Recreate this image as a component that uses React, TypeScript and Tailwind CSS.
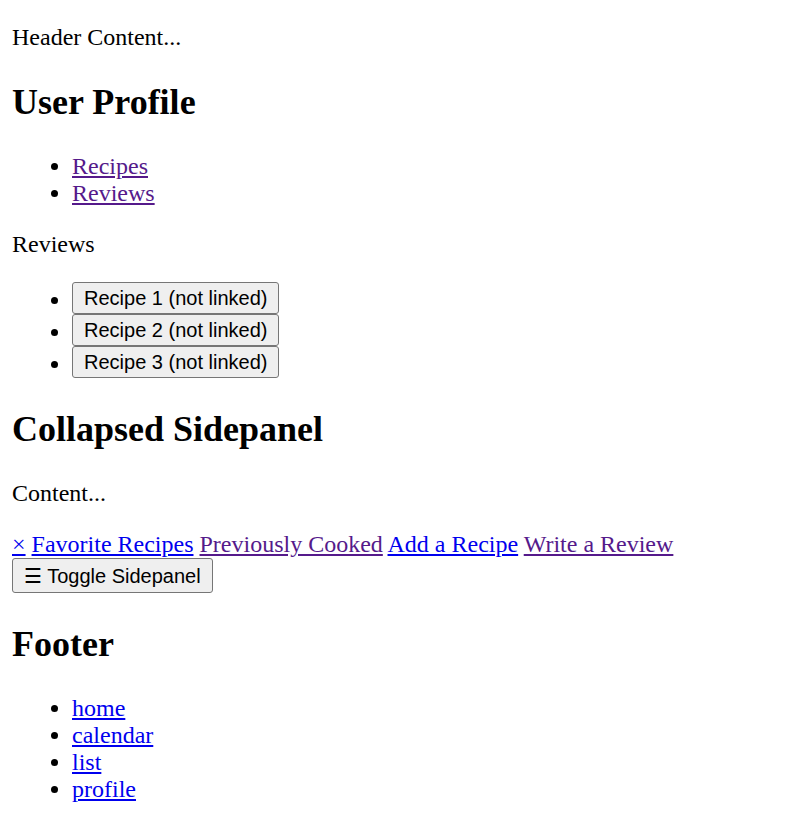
import * as React from "react"

const serif = "font-['Liberation_Serif',serif]"
const btn =
  "font-['Liberation_Sans',Arial,sans-serif] text-[20px] leading-[normal] text-black bg-[#efefef] border border-[#767676] rounded-[3px] px-[11px] h-[32px] align-bottom"

function Link({ href, visited, children }: { href: string; visited?: boolean; children: React.ReactNode }) {
  return (
    <a href={href} className={visited ? "underline text-[#551a8b]" : "underline text-[#0000ee]"}>
      {children}
    </a>
  )
}

export default function App() {
  const recipes = ["Recipe 1", "Recipe 2", "Recipe 3"]
  const footerLinks = ["home", "calendar", "list", "profile"]

  return (
    <div className={`${serif} text-[24px] leading-[normal] text-black bg-white min-h-[824px] px-[12px] pt-[24px] pb-[12px]`}>
      <div>
        <p>Header Content...</p>
      </div>

      <main>
        <h2 className="text-[36px] font-bold mt-[30px] mb-[30px]">User Profile</h2>
        <ul className="list-disc pl-[60px] mb-[24px]">
          <li><Link href="#recipes" visited>Recipes</Link></li>
          <li><Link href="#reviews" visited>Reviews</Link></li>
        </ul>
        <p className="mb-[24px]">Reviews</p>
        <ul className="list-disc pl-[60px]">
          {recipes.map((r) => (
            <li key={r}>
              <button className={btn}>{r} (not linked)</button>
            </li>
          ))}
        </ul>

        <h2 className="text-[36px] font-bold mt-[30px] mb-[30px]">Collapsed Sidepanel</h2>
        <p className="mb-[24px]">Content...</p>
        <div>
          <div>
            <Link href="#close">×</Link>{" "}
            <Link href="#favorites">Favorite Recipes</Link>{" "}
            <Link href="#cooked" visited>Previously Cooked</Link>{" "}
            <Link href="#add">Add a Recipe</Link>{" "}
            <Link href="#review" visited>Write a Review</Link>
          </div>
          <button className={`${btn} h-[35px]`}>☰ Toggle Sidepanel</button>
        </div>
      </main>

      <footer>
        <h2 className="text-[36px] font-bold mt-[30px] mb-[30px]">Footer</h2>
        <ul className="list-disc pl-[60px]">
          {footerLinks.map((f) => (
            <li key={f}><Link href={`#${f}`}>{f}</Link></li>
          ))}
        </ul>
      </footer>
    </div>
  )
}
